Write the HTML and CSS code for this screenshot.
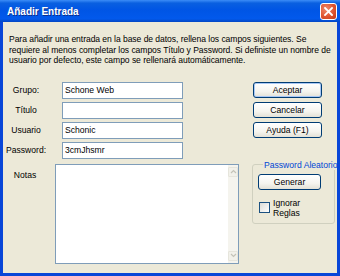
FILE: index.html
```html
<!DOCTYPE html>
<html lang="es">
<head>
  <meta charset="UTF-8" />
  <title>Añadir Entrada</title>
  <link rel="stylesheet" href="styles.css">
</head>
<body>

  <div class="window">
    <div class="titlebar">
      <span class="title">Añadir Entrada</span>
      <span class="close">
        <svg width="9" height="9" viewBox="0 0 9 9">
          <path d="M1 1 L8 8 M8 1 L1 8" stroke="#fff" stroke-width="1.8" stroke-linecap="square" />
        </svg>
      </span>
    </div>

    <div class="client">
      <p class="intro">
        Para añadir una entrada en la base de datos, rellena los campos siguientes. Se<br>
        requiere al menos completar los campos Título y Password. Si definiste un nombre de<br>
        usuario por defecto, este campo se rellenará automáticamente.
      </p>

      <div class="main">
        <div class="fields">
          <label class="label">Grupo:</label>
          <input class="field" type="text" value="Schone Web">

          <label class="label">Título</label>
          <input class="field" type="text" value="">

          <label class="label">Usuario</label>
          <input class="field" type="text" value="Schonic">

          <label class="label">Password:</label>
          <input class="field" type="text" value="3cmJhsmr">

          <label class="label notes-label">Notas</label>
          <div class="notes">
            <textarea class="notes-text"></textarea>
            <div class="scrollbar">
              <span class="arrow">
                <svg width="7" height="5" viewBox="0 0 7 5"><path d="M1 4 L3.5 1.5 L6 4" fill="none" stroke="#c4c3b8" stroke-width="1.2" /></svg>
              </span>
              <span class="track"></span>
              <span class="arrow">
                <svg width="7" height="5" viewBox="0 0 7 5"><path d="M1 1 L3.5 3.5 L6 1" fill="none" stroke="#c4c3b8" stroke-width="1.2" /></svg>
              </span>
            </div>
          </div>
        </div>

        <div class="side">
          <button class="btn default">Aceptar</button>
          <button class="btn">Cancelar</button>
          <button class="btn">Ayuda (F1)</button>

          <fieldset class="group">
            <legend>Password Aleatorio</legend>
            <button class="btn gen">Generar</button>
            <label class="check">
              <span class="box"></span>
              <span class="check-text">Ignorar Reglas</span>
            </label>
          </fieldset>
        </div>
      </div>
    </div>
  </div>

</body>
</html>
```

FILE: styles.css
```css
body {
  margin: 0;
  padding: 0;
  font-family: 'Liberation Sans', Arial, sans-serif;
  font-size: 8.6px;
  color: #000;
}

.window {
  width: 340px;
  height: 276px;
  display: flex;
  flex-direction: column;
  overflow: hidden;
}

.titlebar {
  height: 22px;
  flex-shrink: 0;
  display: flex;
  align-items: center;
  justify-content: space-between;
  padding: 0 3px 0 7px;
  background: linear-gradient(180deg, #3c8df7 0%, #0a60e0 14%, #0055e5 45%, #0259ec 85%, #0447c4 100%);
}

.title {
  color: #fff;
  font-weight: bold;
  font-size: 10px;
  text-shadow: 1px 1px 0 #0a2f8e;
  margin-top: 1px;
}

.close {
  width: 15px;
  height: 15px;
  border: 1px solid #fff;
  border-radius: 3px;
  display: flex;
  align-items: center;
  justify-content: center;
  background: radial-gradient(circle at 35% 35%, #f08a6c 0%, #df5531 55%, #c23a17 100%);
}

.client {
  flex: 1;
  background: #ece9d8;
  border: 3px solid #0846d8;
  border-top: none;
  padding: 12px 6px 0 6px;
}

.intro {
  margin: 0;
  font-size: 8.55px;
  letter-spacing: -0.05px;
  line-height: 10.5px;
  white-space: nowrap;
}

.main {
  display: flex;
  margin-top: 16px;
  margin-left: -6px;
}

.fields {
  width: 236px;
  display: grid;
  grid-template-columns: 52px 184px;
  row-gap: 3px;
  align-items: center;
}

.label {
  text-align: center;
  padding-right: 6px;
}

.field {
  width: 121px;
  height: 17px;
  box-sizing: border-box;
  margin: 0 0 0 7px;
  padding: 0 2px;
  border: 1px solid #7f9db9;
  background: #fff;
  font-family: inherit;
  font-size: 8.6px;
  color: #000;
  outline: none;
}

.notes-label {
  align-self: start;
  margin-top: 8px;
  padding-right: 8px;
}

.notes {
  height: 100px;
  box-sizing: border-box;
  margin-top: 2px;
  border: 1px solid #7f9db9;
  background: #fff;
  display: flex;
}

.notes-text {
  flex: 1;
  border: none;
  resize: none;
  outline: none;
  padding: 0;
  background: transparent;
}

.scrollbar {
  width: 10px;
  display: flex;
  flex-direction: column;
  background: #f5f4ee;
  padding: 2px 0 2px;
}

.arrow {
  height: 10px;
  box-sizing: border-box;
  border: 1px solid #e6e5dc;
  border-radius: 1px;
  background: #f2f1ea;
  display: flex;
  align-items: center;
  justify-content: center;
}

.track {
  flex: 1;
}

.side {
  margin-left: 13px;
  width: 83px;
  display: flex;
  flex-direction: column;
  align-items: flex-start;
}

.btn {
  width: 69px;
  height: 16px;
  margin: 0 0 4px 1px;
  padding: 0;
  border: 1px solid #003c74;
  border-radius: 3px;
  background: linear-gradient(180deg, #ffffff 0%, #f5f4ef 60%, #e3e1d6 100%);
  font-family: inherit;
  font-size: 8.6px;
  color: #000;
}

.btn.default {
  box-shadow: inset 0 0 0 1px #a9c8f5;
}

.group {
  margin: 18px 0 0 0;
  padding: 4px 0 0 5px;
  width: 83px;
  height: 64px;
  box-sizing: border-box;
  border: 1px solid #d0d0bf;
  border-radius: 3px;
  min-width: 0;
}

.group legend {
  color: #0046d5;
  padding: 0 1px;
  margin-left: 5px;
  line-height: 10px;
  white-space: nowrap;
}

.btn.gen {
  width: 63px;
  margin: 0 0 0 0;
}

.check {
  display: flex;
  align-items: center;
  margin-top: 8px;
  margin-left: 1px;
}

.box {
  width: 11px;
  height: 11px;
  box-sizing: border-box;
  border: 1px solid #1c5180;
  background: linear-gradient(135deg, #dcdcd7 0%, #f4f4f2 70%, #fff 100%);
  flex-shrink: 0;
}

.check-text {
  width: 36px;
  margin-left: 3px;
  line-height: 10px;
}
```
